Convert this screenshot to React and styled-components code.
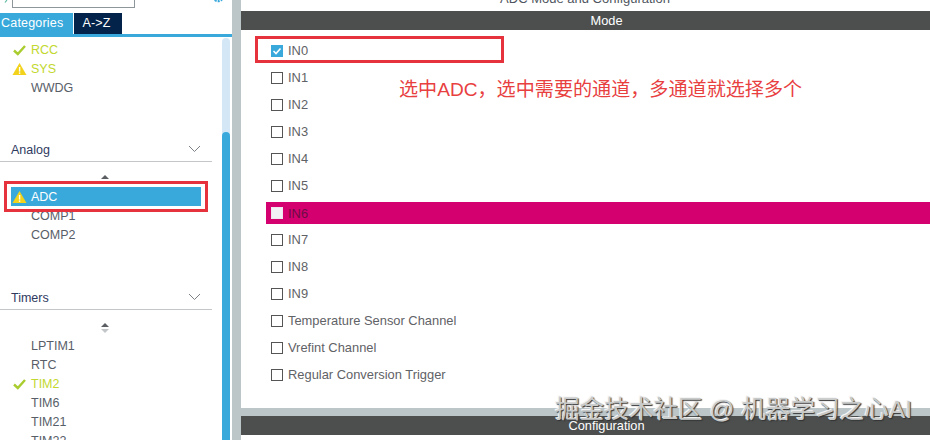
import styled, { createGlobalStyle } from "styled-components";

const GlobalStyle = createGlobalStyle`
  html, body {
    margin: 0;
    padding: 0;
    background: #fff;
    font-family: "Liberation Sans", Arial, sans-serif;
  }
`;

const Page = styled.div`
  position: relative;
  width: 930px;
  height: 440px;
  overflow: hidden;
  display: flex;
  background: #fff;
`;

const Sidebar = styled.div`
  width: 232px;
  flex: none;
  display: flex;
  height: 440px;
  flex-direction: column;
  overflow: hidden;
`;

const SearchRow = styled.div`
  height: 13px;
  flex: none;
  display: flex;
  padding: 0 7px 0 4px;
`;

const BackArrow = styled.svg`
  width: 4px;
  height: 3px;
  margin-right: 4px;
`;

const SearchBox = styled.div`
  width: 121px;
  height: 7px;
  margin-right: auto;
  background: #fff;
  border: 1px solid #8f9699;
  border-top: 0;
`;

const Gear = styled.svg`
  width: 14px;
  height: 14px;
  margin-top: -11px;
`;

const Tabs = styled.div`
  display: flex;
  height: 21px;
  flex: none;
  gap: 1px;
  border-bottom: 3px solid #39a9dc;
`;

const Tab = styled.div`
  height: 21px;
  width: ${(p) => p.$w}px;
  padding: 1px ${(p) => (p.$active ? "0" : "3px")} 0 ${(p) => (p.$active ? "1px" : "0")};
  box-sizing: border-box;
  background: ${(p) => (p.$active ? "#39a9dc" : "#03234b")};
  color: #fff;
  font-size: 12.5px;
  letter-spacing: 0.2px;
  line-height: 19px;
  text-align: ${(p) => (p.$active ? "left" : "center")};
`;

const SidebarBody = styled.div`
  flex: 1;
  display: flex;
  min-height: 0;
`;

const SidebarContent = styled.div`
  width: 212px;
  flex: none;
  padding-top: 3px;
`;

const Scrollbar = styled.div`
  width: 8px;
  margin: 1px 0 0 10px;
  display: flex;
  flex-direction: column;
  background: #d4e7f6;
  border-radius: 4px 4px 0 0;
`;

const ScrollThumb = styled.div`
  margin-top: 94px;
  flex: 1;
  background: #39a9dc;
  border-radius: 4px 4px 0 0;
`;

const Gutter = styled.div`
  width: 9px;
  flex: none;
  background: #bcc6c9;
`;

const PeripheralList = styled.div`
  display: flex;
  flex-direction: column;
`;

const Peripheral = styled.div`
  height: 19px;
  flex: none;
  display: flex;
  align-items: center;
  margin: 0 ${(p) => (p.$selected ? "11px" : "0")} 0 ${(p) => (p.$selected ? "11px" : "0")};
  padding-left: ${(p) => (p.$selected ? "20px" : "31px")};
  position: relative;
  font-size: 12.5px;
  background: ${(p) => (p.$selected ? "#39a9dc" : "transparent")};
  color: ${(p) => (p.$selected ? "#fff" : p.$state ? "#c2d82e" : "#585e68")};
`;

const StateIcon = styled.svg`
  position: absolute;
  left: ${(p) => (p.$selected ? "1px" : "12px")};
  top: 3px;
  width: 15px;
  height: 14px;
`;

const SectionHeader = styled.div`
  height: 24px;
  display: flex;
  align-items: center;
  justify-content: space-between;
  margin-top: ${(p) => p.$gap}px;
  padding: 0 11px 0 11px;
  box-sizing: border-box;
  border-bottom: 1px solid #c3c7c9;
  color: #2f3a5f;
  font-size: 12.5px;
`;

const Chevron = styled.svg`
  width: 13px;
  height: 8px;
  margin-top: -2px;
`;

const ScrollArrows = styled.svg`
  display: block;
  width: 10px;
  height: 12px;
  margin: ${(p) => p.$margin};
`;

const Main = styled.div`
  flex: 1;
  min-width: 0;
  display: flex;
  flex-direction: column;
`;

const Title = styled.div`
  height: 11px;
  flex: none;
  overflow: hidden;
  display: flex;
  align-items: flex-end;
  justify-content: center;
  color: #4f5560;
  font-size: 13px;
  line-height: 14px;
`;

const TitleText = styled.span`
  display: block;
  margin-bottom: 5px;
  margin-right: 1px;
`;

const Bar = styled.div`
  height: 19px;
  flex: none;
  padding-left: 42px;
  background: #4d4f4f;
  color: #fff;
  font-size: 12.8px;
  line-height: 19px;
  text-align: center;
`;

const ModePanel = styled.div`
  flex: none;
  height: 378px;
  box-sizing: border-box;
  padding: 7px 0 0 25px;
  display: flex;
  flex-direction: column;
`;

const ChannelRow = styled.label`
  height: 27px;
  flex: none;
  display: flex;
  align-items: center;
  gap: 5px;
  padding-left: 5px;
  font-size: 12.9px;
  color: ${(p) => (p.$error ? "#6d0c45" : "#5f6266")};
  background: ${(p) => (p.$error ? "#d5006f" : "transparent")};
  ${(p) => p.$error && "height: 22px; margin: 3px 0 2px;"}
`;

const Box = styled.span`
  width: 12px;
  height: 12px;
  flex: none;
  display: flex;
  box-sizing: border-box;
  border: 1px solid ${(p) => (p.$checked ? "#39a9dc" : p.$error ? "#efe6ef" : "#555")};
  background: ${(p) => (p.$checked ? "#39a9dc" : p.$error ? "#f2f0f5" : "#fff")};
`;

const Tick = styled.svg`
  width: 10px;
  height: 10px;
`;

const BottomStrip = styled.div`
  height: 8px;
  flex: none;
  background: #bcc6c9;
`;

const RedFrame = styled.div`
  position: absolute;
  left: ${(p) => p.$x}px;
  top: ${(p) => p.$y}px;
  width: ${(p) => p.$w}px;
  height: ${(p) => p.$h}px;
  box-sizing: border-box;
  border: 3px solid #e6323c;
`;

const Note = styled.div`
  position: absolute;
  left: 399px;
  top: 79px;
  color: #e8403f;
  font-family: "Liberation Sans", "Noto Sans CJK SC", sans-serif;
  font-size: 19.1px;
  line-height: 22px;
  white-space: nowrap;
`;

const Watermark = styled.div`
  position: absolute;
  left: 555px;
  top: 396px;
  color: #c9cbcb;
  font-family: "Liberation Sans", "Noto Sans CJK SC", sans-serif;
  font-size: 24.6px;
  line-height: 28px;
  white-space: nowrap;
  text-shadow: 1px 1px 1px #333, -1px -1px 0 #f4f4f4;
`;

const Check = ({ selected }) => (
  <StateIcon viewBox="0 0 15 14" $selected={selected}>
    <path d="M2 7.5 L5.8 11 L13 3" fill="none" stroke="#a9cc2e" strokeWidth="2.4" />
  </StateIcon>
);

const Warning = ({ selected }) => (
  <StateIcon viewBox="0 0 15 14" $selected={selected}>
    <path d="M7.5 1 L14.5 13 L0.5 13 Z" fill="#f2d21b" />
    <rect x="6.9" y="5" width="1.4" height="4.6" fill="#fff" />
    <rect x="6.9" y="10.4" width="1.4" height="1.5" fill="#fff" />
  </StateIcon>
);

const Item = ({ name, state, selected }) => (
  <Peripheral $state={state} $selected={selected}>
    {state === "ok" && <Check />}
    {state === "warn" && <Warning selected={selected} />}
    {name}
  </Peripheral>
);

const Section = ({ title, gap }) => (
  <SectionHeader $gap={gap}>
    {title}
    <Chevron viewBox="0 0 13 8">
      <path d="M1 1 L6.5 6.5 L12 1" fill="none" stroke="#7b8186" strokeWidth="1" />
    </Chevron>
  </SectionHeader>
);

const Arrows = ({ margin, both }) => (
  <ScrollArrows viewBox="0 0 10 12" $margin={margin}>
    <path d="M5 1 L9 5 L1 5 Z" fill="#5b5f63" />
    {both && <path d="M5 11 L9 7 L1 7 Z" fill="#c3c6c8" />}
  </ScrollArrows>
);

const channels = [
  "IN1",
  "IN2",
  "IN3",
  "IN4",
  "IN5",
];

const laterChannels = [
  "IN7",
  "IN8",
  "IN9",
  "Temperature Sensor Channel",
  "Vrefint Channel",
  "Regular Conversion Trigger",
];

export default function App() {
  return (
    <Page>
      <GlobalStyle />
      <Sidebar>
        <SearchRow>
          <BackArrow viewBox="0 0 4 3">
            <path d="M3 0 L1 2.5" fill="none" stroke="#5cb8a0" strokeWidth="1.2" />
          </BackArrow>
          <SearchBox />
          <Gear viewBox="0 0 14 14">
            <circle cx="7" cy="7" r="5" fill="none" stroke="#39a9dc" strokeWidth="2.5" strokeDasharray="2 1" />
          </Gear>
        </SearchRow>
        <Tabs>
          <Tab $active $w={73}>Categories</Tab>
          <Tab $w={48}>A-&gt;Z</Tab>
        </Tabs>
        <SidebarBody>
          <SidebarContent>
            <PeripheralList>
              <Item name="RCC" state="ok" />
              <Item name="SYS" state="warn" />
              <Item name="WWDG" />
            </PeripheralList>
            <Section title="Analog" gap={41} />
            <Arrows margin="12px 0 1px 100px" />
            <PeripheralList>
              <Item name="ADC" state="warn" selected />
              <Item name="COMP1" />
              <Item name="COMP2" />
            </PeripheralList>
            <Section title="Timers" gap={42} />
            <Arrows margin="12px 0 2px 100px" both />
            <PeripheralList>
              <Item name="LPTIM1" />
              <Item name="RTC" />
              <Item name="TIM2" state="ok" />
              <Item name="TIM6" />
              <Item name="TIM21" />
              <Item name="TIM22" />
            </PeripheralList>
          </SidebarContent>
          <Scrollbar>
            <ScrollThumb />
          </Scrollbar>
        </SidebarBody>
      </Sidebar>
      <Gutter />
      <Main>
        <Title><TitleText>ADC Mode and Configuration</TitleText></Title>
        <Bar>Mode</Bar>
        <ModePanel>
          <ChannelRow>
            <Box $checked>
              <Tick viewBox="0 0 10 10">
                <path d="M1.5 5 L4 7.5 L8.5 2.5" fill="none" stroke="#fff" strokeWidth="1.6" />
              </Tick>
            </Box>
            IN0
          </ChannelRow>
          {channels.map((c) => (
            <ChannelRow key={c}><Box />{c}</ChannelRow>
          ))}
          <ChannelRow $error><Box $error />IN6</ChannelRow>
          {laterChannels.map((c) => (
            <ChannelRow key={c}><Box />{c}</ChannelRow>
          ))}
        </ModePanel>
        <BottomStrip />
        <Bar>Configuration</Bar>
      </Main>
      <RedFrame $x={4} $y={181} $w={204} $h={31} />
      <RedFrame $x={255} $y={36} $w={249} $h={27} />
      <Note>选中ADC，选中需要的通道，多通道就选择多个</Note>
      <Watermark>掘金技术社区 @ 机器学习之心AI</Watermark>
    </Page>
  );
}
